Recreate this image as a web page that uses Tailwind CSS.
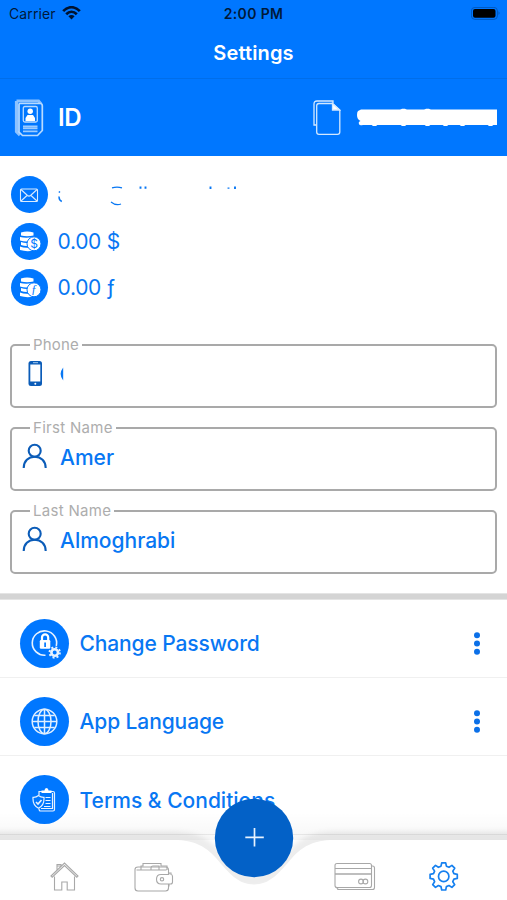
<!DOCTYPE html>
<html lang="en">
<head>
<meta charset="utf-8">
<title>Settings</title>
<script src="https://cdn.jsdelivr.net/npm/@tailwindcss/browser@4"></script>
</head>
<body class="bg-white">
<div class="relative w-[507px] h-[900px] overflow-hidden bg-white font-['Inter',sans-serif] text-[#0877f3]">
  <header class="h-[156px] bg-[#0077ff] text-white flex flex-col">
    <div class="h-[27px] grid grid-cols-3 items-center text-black/80 px-[9px]">
      <div class="flex items-center gap-[6px]"><span class="text-[14px] leading-[20px] tracking-[0.1px]">Carrier</span>
        <svg class="w-[19px] h-[14px] -mt-[1px]" viewBox="0 0 19 14" fill="none" stroke="#00132e" stroke-width="2.7"><path d="M1.2 5.2C6-.1 13-.1 17.8 5.2M4.2 8.2c3.2-3.2 7.4-3.2 10.6 0"/><path d="M9.5 13.4 6.4 10.2c1.8-1.6 4.4-1.6 6.2 0z" fill="#00132e" stroke="none"/></svg>
      </div>
      <div class="text-center text-[14px] leading-[20px] font-semibold whitespace-nowrap tracking-[0.35px]">2:00 PM</div>
      <div class="flex justify-end -mr-[3px]"><svg class="w-[30px] h-[14px]" viewBox="0 0 30 14"><rect x=".4" y=".4" width="26" height="12" rx="3.500" fill="none" stroke="#0058bd"/><rect x="2" y="2" width="22.500" height="8.800" rx="2" fill="#000"/><path d="M27.500 4.300q2.200 1.800 0 3.800z" fill="#0058bd"/></svg></div>
    </div>
    <h1 class="h-[52px] border-b border-[#006eea] text-center text-[20px] leading-[52px] font-semibold tracking-[0.15px]">Settings</h1>
    <div class="h-[77px] flex items-center pl-[14px] pr-[10px]">
      <svg class="w-[30px] h-[38px]" viewBox="0 0 30 38" fill="none" stroke="#cfe5ff"><path d="M2.500 2V32.500L6 36M2.500 2H24.500L27 5" stroke-width="3.200" stroke="#8cc2ff"/><path d="M5 5.500q0-1 1-1H26q2.300 0 2.300 2.300V31.500L23.500 36.500H8.500L5 33z" fill="#0077ff" stroke="#b9dbff" stroke-width="1.700"/><rect x="9.300" y="7.500" width="14" height="15.500" rx="1.500" stroke="#b9dbff" stroke-width="1.300"/><g fill="#fff" stroke="none"><circle cx="16.200" cy="12.300" r="2.700"/><path d="M11.500 22V19l2-3h5.500l2 3v3z"/></g><path d="M9 27.300h14.500M9 29.300h14.500M9 32.300h14.500" stroke="#9dccff" stroke-width="1.700"/></svg>
      <span class="ml-[14px] mt-[1px] text-[24px] leading-[30px] font-semibold tracking-[-0.5px]">ID</span>
      <svg class="ml-auto w-[28px] h-[36px]" viewBox="0 0 28 36" fill="none" stroke="#d3e8ff" stroke-width="1.3"><path d="M3 25H1V4q0-3 3-3h16v2"/><path d="M19.500 3.500H6q-2.300 0-2.300 2.300V32q0 2.300 2.300 2.300h18.500q2.300 0 2.300-2.300V10z"/><path d="M19.500 3.500V10h7z" fill="#fff"/></svg>
      <svg class="ml-[16px] w-[140px] h-[20px]" viewBox="0 0 140 20" fill="#fff"><path d="M1 3 4 1.500H140V17H6Q2.500 18 2 16q-1-2 1.500-3Q0 11.500 0 7 0 4 1 3z"/><path d="M14 16.500h7l-2 1.500h-3zM43 16.500h7l-2 1.500h-3zM67 16.500h7l-2 1.500h-3zM85 16.500h7l-2 1.500h-3zM102 16.500h7l-2 1.500h-3zM130 16.500h7l-2 1.500h-3zM43 2h7l-2-1.200h-3zM67 2h7l-2-1.200h-3z"/></svg>
    </div>
  </header>

  <section class="h-[189px] pt-[20px] pl-[10.5px] flex flex-col gap-[9.5px]">
    <div class="flex items-center h-[37px]">
      <div class="w-[37px] h-[37px] rounded-full bg-[#0077ff] grid place-items-center"><svg class="w-[20px] h-[16px]" viewBox="0 0 20 16" fill="none" stroke="#d9ebff" stroke-width="1.1"><rect x="1.500" y="2" width="17" height="12.500" rx="1"/><path d="m2 2.500 6.500 6q1.500 1.300 3 0l6.500-6M2 14l6-5.500M18 14l-6-5.500"/></svg></div>
      <svg class="ml-[10px] w-[220px] h-[24px]" viewBox="0 0 220 24" fill="none" stroke="#0877f3" stroke-width="1.500"><path d="M.8 9.500 2 8.500M1.200 13.500q-.6 3.500 2.600 5"/><path d="M54 4.800q5-1.500 10 0M53 19q5 4 10 2" stroke-width="1.300"/><path d="M82.500 3.500v2.300M87.500 3.500v2.300M152.500 3.500v2.500M170.500 4.500v1.300M177 3.500v2.500" stroke-width="1.900"/></svg>
    </div>
    <div class="flex items-center h-[37px]">
      <div class="w-[37px] h-[37px] rounded-full bg-[#0077ff] grid place-items-center"><svg class="w-[22px] h-[21px] ml-[2px]" viewBox="0 0 22 21" fill="#fff"><path d="M2 1.500q6-2 12.500 0v3Q8 6 2 4.500zM1 6q6 1.500 13 0v3.500q-7 2-13 0zM2 11q5 1.500 9 .5v3q-4 1-9-.5zM1 15.500q5 2 9.500 1l3.500 3q-6 1.500-13-.5z"/><circle cx="15" cy="12.800" r="7" stroke="#0077ff"/><text x="15" y="17.200" text-anchor="middle" font-family="Inter" font-size="12" fill="#0077ff">$</text></svg></div>
      <span class="ml-[10px] mt-[1px] text-[21px] leading-[28px] tracking-[-0.3px]">0.00 $</span>
    </div>
    <div class="flex items-center h-[37px]">
      <div class="w-[37px] h-[37px] rounded-full bg-[#0077ff] grid place-items-center"><svg class="w-[22px] h-[21px] ml-[2px]" viewBox="0 0 22 21" fill="#fff"><path d="M2 1.500q6-2 12.500 0v3Q8 6 2 4.500zM1 6q6 1.500 13 0v3.500q-7 2-13 0zM2 11q5 1.500 9 .5v3q-4 1-9-.5zM1 15.500q5 2 9.500 1l3.500 3q-6 1.500-13-.5z"/><circle cx="15" cy="12.800" r="7" stroke="#0077ff"/><text x="15" y="16" text-anchor="middle" font-family="Liberation Serif" font-style="italic" font-size="12" fill="#0077ff">ƒ</text></svg></div>
      <span class="ml-[10px] text-[21px] leading-[28px] tracking-[-0.3px]">0.00 ƒ</span>
    </div>
  </section>

  <section class="h-[248px] px-[10px] flex flex-col gap-[20px]">
    <div class="relative h-[64px] -mb-[1px] border-2 border-[#a9a9a9] rounded-[5px] flex pl-[11px] pt-[13px] -mt-[1px] shrink-0">
      <span class="absolute left-[18px] -top-[11px] bg-white px-[3px] text-[15px] leading-[20px] tracking-[0.2px] text-[#adadad]">Phone</span>
      <svg class="w-[26px] h-[28px]" viewBox="0 0 26 28"><rect x="5.500" y="2" width="13.500" height="25" rx="2.500" fill="#0b5cb8"/><path d="M7.300 5.500h10V22.500h-10z" fill="#fff"/><path d="M10 3.700h5" stroke="#a6cbed"/><circle cx="12.300" cy="24.700" r="1" fill="#fff"/></svg>
      <svg class="ml-[11px] mt-[7px] w-[6px] h-[16px]" viewBox="0 0 6 16"><path d="M3.200 1.500Q-2 8 3.200 14.500z" fill="#0877f3"/></svg>
    </div>
    <div class="relative h-[64px] -mb-[1px] border-2 border-[#a9a9a9] rounded-[5px] flex pl-[10px] pt-[14px] shrink-0">
      <span class="absolute left-[18px] -top-[11px] bg-white px-[3px] text-[15px] leading-[20px] tracking-[0.3px] text-[#adadad]">First Name</span>
      <svg class="w-[26px] h-[26px]" viewBox="0 0 26 26" fill="none" stroke="#0b5cb8" stroke-width="2.100"><circle cx="12.700" cy="7.700" r="6"/><path d="M1.700 25c0-6.800 4.700-11.300 11-11.300s11 4.500 11 11.300"/></svg>
      <span class="ml-[12px] mt-[1px] text-[21px] leading-[28px] font-medium">Amer</span>
    </div>
    <div class="relative h-[64px] border-2 border-[#a9a9a9] rounded-[5px] flex pl-[10px] pt-[14px] shrink-0">
      <span class="absolute left-[18px] -top-[11px] bg-white px-[3px] text-[15px] leading-[20px] tracking-[0.3px] text-[#adadad]">Last Name</span>
      <svg class="w-[26px] h-[26px]" viewBox="0 0 26 26" fill="none" stroke="#0b5cb8" stroke-width="2.100"><circle cx="12.700" cy="7.700" r="6"/><path d="M1.700 25c0-6.800 4.700-11.300 11-11.300s11 4.500 11 11.300"/></svg>
      <span class="ml-[12px] mt-[1px] text-[21px] leading-[28px] font-medium">Almoghrabi</span>
    </div>
  </section>

  <div class="h-[7px] bg-[#d4d4d4] border-y border-[#e4e4e4]"></div>
  <main>
    <div class="h-[78px] pt-[9px] border-b border-[#f0f0f0] flex items-center pl-[20px] pr-[27px]">
      <div class="w-[49px] h-[49px] rounded-full bg-[#0077ff] grid place-items-center"><svg class="w-[32px] h-[32px]" viewBox="0 0 32 32" fill="none" stroke="#e7f2ff" stroke-width="1.600"><path d="M16.500 28.200A12.200 12.200 0 1 1 27.300 19"/><rect x="10.800" y="13" width="10.500" height="8.700" rx="1.200" fill="#fff" stroke="none"/><path d="M13 13.500v-3a3.100 3.100 0 0 1 6.200 0v3" stroke="#fff" stroke-width="2.200"/><path d="M16.100 15.500v4.500" stroke="#0077ff" stroke-width="1.700"/><circle cx="25.700" cy="25.500" r="3.300" stroke-width="2.600"/><circle cx="25.700" cy="25.500" r="5.200" stroke-width="1.900" stroke-dasharray="2 2.084"/></svg></div>
      <span class="ml-[10.5px] mt-[2px] text-[21px] leading-[28px] font-medium tracking-[-0.12px]">Change Password</span>
      <svg class="ml-auto w-[6px] h-[23px]" viewBox="0 0 6 23" fill="#0b70e8"><circle cx="3" cy="3.200" r="3"/><circle cx="3" cy="11.500" r="3"/><circle cx="3" cy="19.800" r="3"/></svg>
    </div>
    <div class="h-[78px] pt-[9px] border-b border-[#f0f0f0] flex items-center pl-[20px] pr-[27px]">
      <div class="w-[49px] h-[49px] rounded-full bg-[#0077ff] grid place-items-center"><svg class="w-[27px] h-[27px]" viewBox="0 0 27 27" fill="none" stroke="#e0efff" stroke-width="1.500"><circle cx="13.500" cy="13.500" r="12.300"/><ellipse cx="13.500" cy="13.500" rx="6.500" ry="12.300"/><path d="M13.500 1v25M1 13.500h25M3.300 7.500h20.400M3.300 19.500h20.400"/></svg></div>
      <span class="ml-[10.5px] mt-[2px] text-[21px] leading-[28px] font-medium tracking-[-0.1px]">App Language</span>
      <svg class="ml-auto w-[6px] h-[23px]" viewBox="0 0 6 23" fill="#0b70e8"><circle cx="3" cy="3.200" r="3"/><circle cx="3" cy="11.500" r="3"/><circle cx="3" cy="19.800" r="3"/></svg>
    </div>
    <div class="h-[79px] pt-[9px] border-b border-[#ededed] flex items-center pl-[20px]">
      <div class="w-[49px] h-[49px] rounded-full bg-[#0077ff] grid place-items-center"><svg class="w-[25px] h-[26px]" viewBox="0 0 25 26" fill="none" stroke="#e7f2ff" stroke-width="1.200"><path d="M10 4.500H7V8M7 21.500q0 2.500 1.500 2.500H21q1.500 0 1.500-1.500V6q0-1.500-1.500-1.500h-2M20.500 6v15.500H9M13.500 10.500h5M13.500 13.500h5M13.500 16.500h5M12 19.500h6.500"/><path d="M9.500 6V3.500h3q0-2.500 2-2.500t2 2.500h3V6z" fill="#fff" stroke="none"/><path d="M6.500 8.500Q4 10.500 1 10.300q-.5 8 5.500 10.900 6-2.900 5.500-10.900-3 .2-5.500-1.800z" fill="#0077ff"/><path d="m4 15 2 2 3.500-4" stroke-width="1.600"/></svg></div>
      <span class="ml-[10.5px] mt-[2px] text-[21px] leading-[28px] font-medium">Terms &amp; Conditions</span>
    </div>
  </main>

  <nav class="absolute left-0 bottom-0 w-[507px] h-[106px]">
    <svg class="absolute inset-0 w-[507px] h-[106px]" viewBox="0 0 507 106">
      <defs>
        <linearGradient id="shade" x1="0" y1="0" x2="0" y2="1"><stop offset="0" stop-color="#000" stop-opacity="0"/><stop offset="1" stop-color="#000" stop-opacity=".035"/></linearGradient>
        <filter id="soft" x="-10%" y="-30%" width="120%" height="160%"><feGaussianBlur stdDeviation="2.500"/></filter>
      </defs>
      <path d="M0 18H507V46H0z" fill="url(#shade)"/>
      <path d="M-20 44H174C196 44 208 52 218 64C228 77 238 87 254 87S280 77 290 64C300 52 312 44 334 44H530" fill="none" stroke="#000" stroke-opacity=".07" stroke-width="13" filter="url(#soft)"/>
      <path d="M0 46H174C195 46 206 53 216 64C229 79 238 90.500 254 90.500S279 79 292 64C302 53 313 46 334 46H507V106H0z" fill="#fff"/>
      <circle cx="254" cy="44" r="39.200" fill="#0361c7"/>
      <path d="M245.300 43.300h18.500M254.500 34v18.500" stroke="#e8f3ff" stroke-width="1.700" fill="none"/>
    </svg>
    <div class="relative h-full pt-[68px] flex">
      <svg class="ml-[50px] w-[30px] h-[30px]" viewBox="0 0 30 30" fill="none" stroke="#a8a8a8" stroke-width="1.100"><path d="M4.500 14.500V28h7.300v-8h5.400v8h7.300V14.500M1 14 14.500 1 28 14l-1.200 1.200L14.500 3.500 2.200 15.200zM7 8V2.500h4v1.700M7 4h4"/></svg>
      <svg class="ml-[54px] w-[40px] h-[31px]" viewBox="0 0 40 31" fill="none" stroke="#a8a8a8" stroke-width="1.100"><path d="M34.500 12.500V8q0-3-3-3H4Q1 5 1 7.500V26q0 3 3 3h27.500q3 0 3-3v-4"/><path d="M2.500 8h30M7 8V4h2V1.500h18V4h6v4M17 8V6q0-2 2-2h6v4"/><path d="M35 12.500V11h2v1.500q1.500 0 1.500 2V20q0 2-2 2H27q-4.500 0-4.500-4.700 0-4.800 4.500-4.800h8M35 22v2h-1"/><circle cx="28" cy="17.300" r="1.700"/></svg>
      <svg class="ml-[160px] w-[42px] h-[29px]" viewBox="0 0 42 29" fill="none" stroke="#a8a8a8" stroke-width="1.100"><rect x="1" y="1.500" width="36.500" height="24" rx="2"/><path d="M37.500 4h1q2 0 2 2V25.500q0 2-2 2H5q-2 0-2-2M1 6.500h36"/><path d="M1 12h36" stroke-width="1.700"/><circle cx="27" cy="19.500" r="2.400"/><circle cx="31.400" cy="19.500" r="2.400"/></svg>
      <svg class="ml-[52px] -mt-[1px] w-[32px] h-[32px]" viewBox="0 0 32 32" fill="none" stroke="#1680ef" stroke-width="1.700" stroke-linejoin="round"><path d="M13 5.200 13.700 1.800h4L18.400 5.200 21 6.300l2.900-1.900 2.800 2.800-1.900 2.900 1.100 2.600 3.400.7v4l-3.400.7-1.100 2.600 1.900 2.900-2.800 2.800-2.900-1.900-2.600 1.100-.7 3.400h-4L13 25.600l-2.600-1.100-2.900 1.900-2.800-2.800 1.900-2.900L5.500 18.100l-3.400-.7v-4l3.400-.7 1.100-2.600L4.700 7.200l2.800-2.800 2.900 1.900z"/><circle cx="15.700" cy="15.400" r="5.200"/></svg>
    </div>
  </nav>
</div>
</body>
</html>
